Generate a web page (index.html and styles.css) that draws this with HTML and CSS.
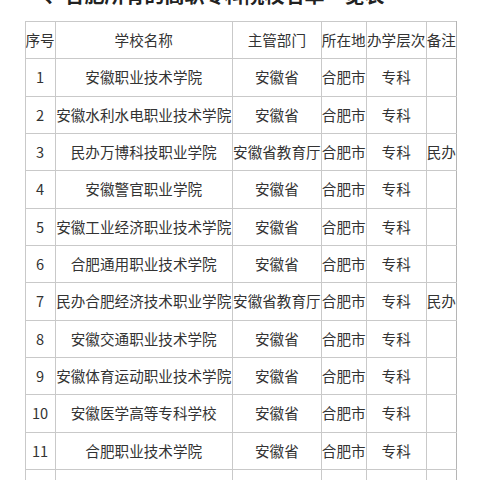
FILE: index.html
```html
<!DOCTYPE html>
<html lang="zh-CN">
<head>
<meta charset="utf-8">
<link rel="stylesheet" href="styles.css">
</head>
<body>
<div class="page">
  <h2 class="title">一、合肥所有的高职专科院校名单一览表</h2>
  <table class="list">
    <colgroup>
      <col class="c-no"><col class="c-name"><col class="c-dept"><col class="c-city"><col class="c-level"><col class="c-note">
    </colgroup>
    <tr><td>序号</td><td>学校名称</td><td>主管部门</td><td>所在地</td><td>办学层次</td><td>备注</td></tr>
    <tr><td>1</td><td>安徽职业技术学院</td><td>安徽省</td><td>合肥市</td><td>专科</td><td></td></tr>
    <tr><td>2</td><td>安徽水利水电职业技术学院</td><td>安徽省</td><td>合肥市</td><td>专科</td><td></td></tr>
    <tr><td>3</td><td>民办万博科技职业学院</td><td>安徽省教育厅</td><td>合肥市</td><td>专科</td><td>民办</td></tr>
    <tr><td>4</td><td>安徽警官职业学院</td><td>安徽省</td><td>合肥市</td><td>专科</td><td></td></tr>
    <tr><td>5</td><td>安徽工业经济职业技术学院</td><td>安徽省</td><td>合肥市</td><td>专科</td><td></td></tr>
    <tr><td>6</td><td>合肥通用职业技术学院</td><td>安徽省</td><td>合肥市</td><td>专科</td><td></td></tr>
    <tr><td>7</td><td>民办合肥经济技术职业学院</td><td>安徽省教育厅</td><td>合肥市</td><td>专科</td><td>民办</td></tr>
    <tr><td>8</td><td>安徽交通职业技术学院</td><td>安徽省</td><td>合肥市</td><td>专科</td><td></td></tr>
    <tr><td>9</td><td>安徽体育运动职业技术学院</td><td>安徽省</td><td>合肥市</td><td>专科</td><td></td></tr>
    <tr><td>10</td><td>安徽医学高等专科学校</td><td>安徽省</td><td>合肥市</td><td>专科</td><td></td></tr>
    <tr><td>11</td><td>合肥职业技术学院</td><td>安徽省</td><td>合肥市</td><td>专科</td><td></td></tr>
    <tr><td>12</td><td>安徽电子信息职业技术学院</td><td>安徽省</td><td>合肥市</td><td>专科</td><td></td></tr>
  </table>
</div>
</body>
</html>
```
FILE: styles.css
```css
html, body {
  margin: 0;
  padding: 0;
  background: #ffffff;
  overflow: hidden;
}
.page {
  padding-left: 24.5px;
  font-family: "Noto Sans CJK SC", "Noto Sans", sans-serif;
  color: #333333;
}
.title {
  margin: -19px 0 0 0;
  height: 40px;
  line-height: 28px;
  font-size: 20px;
  font-weight: bold;
  color: #222222;
  white-space: nowrap;
}
.list {
  border-collapse: collapse;
  table-layout: fixed;
  width: 431.2px;
  font-size: 14.6px;
}
.c-no { width: 30px; }
.c-name { width: 177.5px; }
.c-dept { width: 88.7px; }
.c-city { width: 45px; }
.c-level { width: 60px; }
.c-note { width: 30px; }
.list tr {
  height: 37.33px;
}
.list td {
  border: 1px solid #c9c9c9;
  padding: 0;
  text-align: center;
  vertical-align: middle;
  white-space: nowrap;
  overflow: visible;
  line-height: 20px;
}
.list td:last-child {
  border-right-color: #b5b5b5;
}
```
